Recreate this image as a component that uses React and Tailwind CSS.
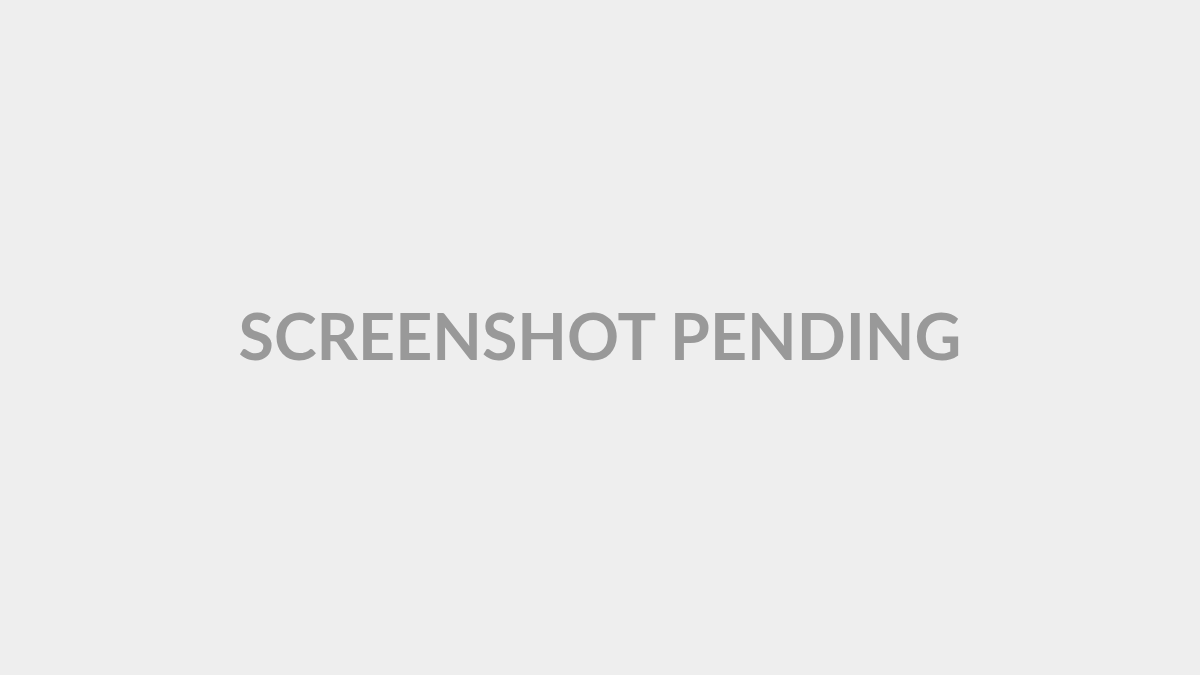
export default function App() {
  return (
    <div className="w-[1200px] h-[675px] bg-[#eeeeee] flex items-center justify-center pb-[4px]">
      <h1 className="font-['Lato',sans-serif] font-bold text-[64.5px] leading-none text-[#999999] tracking-normal">
        SCREENSHOT PENDING
      </h1>
    </div>
  );
}
